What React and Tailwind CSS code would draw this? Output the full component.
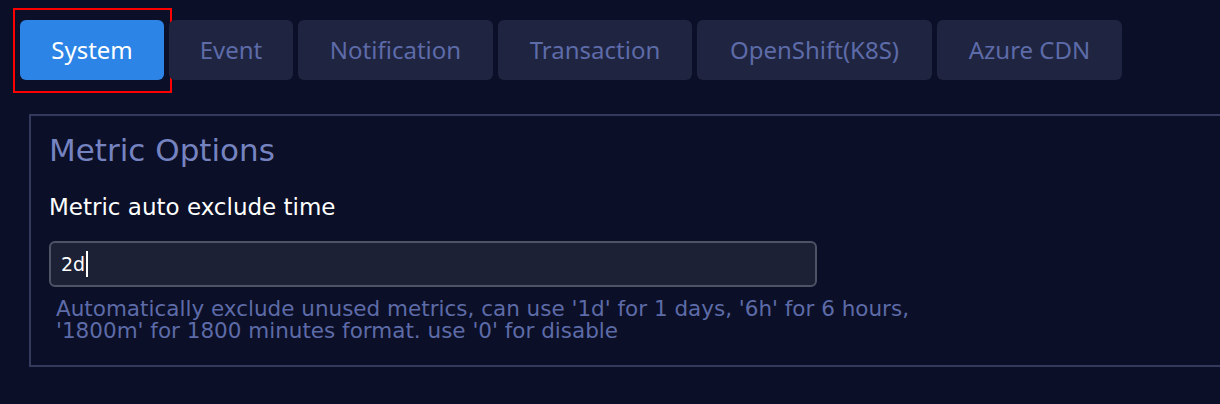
import React from 'react';

const tabs = [
  { name: 'System', width: 'w-[144px]' },
  { name: 'Event', width: 'w-[124px]' },
  { name: 'Notification', width: 'w-[195px]' },
  { name: 'Transaction', width: 'w-[194px]' },
  { name: 'OpenShift(K8S)', width: 'w-[235px]' },
  { name: 'Azure CDN', width: 'w-[185px]' },
];

const TabBar = ({ active }) => {
  return (
    <div className="flex items-center gap-[5px] pl-[20px] pt-[20px]">
      {tabs.map((tab) => {
        const isActive = tab.name === active;
        return (
          <div key={tab.name} className="relative">
            <button
              className={`flex h-[60px] ${tab.width} items-center justify-center rounded-[6px] text-[24px] font-['Noto_Sans',sans-serif] ${
                isActive ? 'bg-[#2b84e6] text-white' : 'bg-[#1f2440] text-[#5d6ba8]'
              }`}
            >
              {tab.name}
            </button>
            {/* highlight box from the screenshot */}
            {isActive && (
              <div className="pointer-events-none absolute -left-[7px] -top-[12px] h-[85px] w-[159px] border-2 border-[#ff0000]" />
            )}
          </div>
        );
      })}
    </div>
  );
};

const MetricOptions = () => {
  return (
    <div className="ml-[29px] mt-[34px] h-[253px] border-2 border-r-0 border-[#343a5e] pl-[18px] pt-[14px] font-['DejaVu_Sans',sans-serif]">
      <h2 className="text-[31px] leading-[40px] text-[#7583c0]">Metric Options</h2>
      <label className="mt-[23px] block text-[23px] leading-[28px] text-white">Metric auto exclude time</label>
      <div className="mt-[20px] flex h-[46px] w-[768px] items-center rounded-[6px] border-2 border-[#4f5366] bg-[#1d2135] pl-[10px]">
        <span className="text-[19px] leading-[24px] text-white">2d</span>
        <span className="ml-[1px] h-[26px] w-[2px] bg-white" />
      </div>
      <p className="mt-[11px] pl-[7px] text-[21.5px] leading-[22px] text-[#5d6ba8]">
        Automatically exclude unused metrics, can use '1d' for 1 days, '6h' for 6 hours,
        <br />
        '1800m' for 1800 minutes format. use '0' for disable
      </p>
    </div>
  );
};

const App = () => {
  return (
    <div className="h-[404px] w-[1220px] overflow-hidden bg-[#0b0f27]">
      <TabBar active="System" />
      <MetricOptions />
    </div>
  );
};

export default App;
